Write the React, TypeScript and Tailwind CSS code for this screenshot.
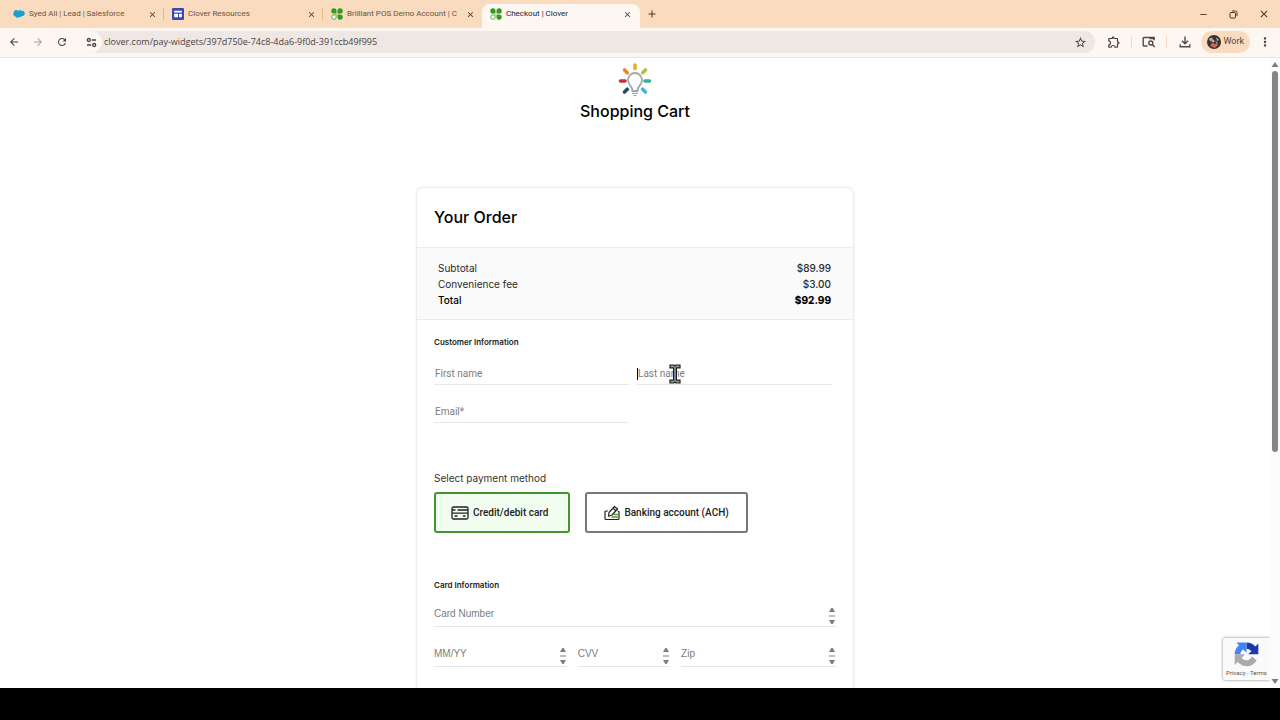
import React from 'react';
import {
  MdArrowBack,
  MdArrowForward,
  MdRefresh,
  MdStarBorder,
  MdOutlineExtension,
  MdMoreVert,
  MdClose,
  MdAdd,
  MdRemove,
} from 'react-icons/md';

const SalesforceIcon: React.FC = () => (
  <svg width="12" height="12" viewBox="0 0 24 24" fill="#1ba1cf">
    <path d="M10 6a5 5 0 0 1 7-.2 5.2 5.2 0 0 1 6.600 5.200 5.200 5.200 0 0 1-6.200 5.100A4.200 4.200 0 0 1 12 18.200a4.600 4.600 0 0 1-7.400-1.700A4.200 4.200 0 0 1 1.500 9.500 4.800 4.800 0 0 1 10 6z" />
  </svg>
);

const SitesIcon: React.FC = () => (
  <svg width="12" height="12" viewBox="0 0 11 11">
    <rect width="11" height="11" rx="1" fill="#3f48ab" />
    <path d="M2 2.500h7v1.700H2zM2 5.200h3.500v3.300H2zM6.500 5.200H9v3.300H6.500z" fill="#fff" />
  </svg>
);

const CloverIcon: React.FC = () => (
  <svg width="12" height="12" viewBox="0 0 24 24" fill="#329b1c">
    <path d="M11 11H5.800A5.200 5.200 0 1 1 11 5.800z" />
    <path d="M13 11h5.200A5.200 5.200 0 1 0 13 5.800z" />
    <path d="M13 13h5.200A5.200 5.200 0 1 1 13 18.200z" />
    <path d="M10.200 13.800H5.800a4.400 4.400 0 1 0 4.400 4.400z" fill="#fff" stroke="#329b1c" strokeWidth="1.600" />
  </svg>
);

const TuneIcon: React.FC = () => (
  <svg width="11" height="11" viewBox="0 0 11 11" fill="none" stroke="#4b4340" strokeWidth="1.300">
    <circle cx="2.800" cy="3" r="1.500" />
    <path d="M5.800 3H10M1 8h4.200" />
    <circle cx="8.200" cy="8" r="1.500" />
  </svg>
);

const PageSearchIcon: React.FC = () => (
  <svg width="14" height="12" viewBox="0 0 14 12" fill="none" stroke="#544742" strokeWidth="1.400">
    <path d="M5.500 10H2a.8.800 0 0 1-.8-.8V2.300a.8.800 0 0 1 .8-.8h10v2.800" />
    <path d="M7.500 2.200h5" strokeWidth="2" />
    <circle cx="8.800" cy="7" r="2" />
    <path d="M10.300 8.500l2.500 2.500" />
  </svg>
);

const DownloadIcon: React.FC = () => (
  <svg width="12" height="12" viewBox="0 0 12 12" fill="none" stroke="#544742" strokeWidth="1.400">
    <path d="M6 .5v7M3 4.800l3 3 3-3M1.200 8.300v2.500h9.600V8.300" />
  </svg>
);

const RestoreIcon: React.FC = () => (
  <svg width="9" height="9" viewBox="0 0 9 9" fill="none" stroke="#4a3626" strokeWidth="1">
    <rect x="1" y="2.500" width="5.500" height="5.500" rx="1" />
    <path d="M3 1h3.500A1.500 1.500 0 0 1 8 2.500V6" />
  </svg>
);

const BulbLogo: React.FC = () => (
  <svg width="34" height="34" viewBox="0 0 34 34" fill="none" strokeLinecap="round">
    <g strokeWidth="3.600">
      <path d="M17 2v3.500" stroke="#d9b52c" />
      <path d="M6.500 7l2.800 2.800" stroke="#e8862e" />
      <path d="M27.500 7l-2.800 2.800" stroke="#a9c54a" />
      <path d="M2.500 18H7" stroke="#c9303f" />
      <path d="M27 18h4.500" stroke="#35b197" />
      <path d="M9.300 26.200L6.500 29" stroke="#1d5365" />
      <path d="M24.700 26.200l2.800 2.800" stroke="#48b4d6" />
    </g>
    <path d="M14.300 28v-1.500c0-2.500-4.300-5-4.300-9.500a7 7 0 0 1 14 0c0 4.500-4.300 7-4.300 9.500V28z" fill="#fff" stroke="#a5a7aa" strokeWidth="1.800" strokeLinejoin="round" />
    <path d="M14.500 30.300h5M15.800 32.500h2.400" stroke="#a5a7aa" strokeWidth="1.200" />
  </svg>
);

const CardIcon: React.FC = () => (
  <svg width="18" height="14" viewBox="0 0 18 14" fill="none" stroke="#222" strokeWidth="1.300">
    <rect x="1" y="1" width="16" height="12" rx="1.500" />
    <path d="M1 4h3.500M6.500 4H17M1 7.200h16M3.500 10h3M12 10h2.500" />
  </svg>
);

const CheckIcon: React.FC = () => (
  <svg width="16" height="16" viewBox="0 0 16 16" fill="none" strokeLinecap="round" strokeLinejoin="round">
    <path d="M3.500 6H2a1 1 0 0 0-1 1v6.500a1 1 0 0 0 1 1h12a1 1 0 0 0 1-1V7a1 1 0 0 0-1-1" stroke="#222" strokeWidth="1.200" />
    <path d="M5 7.500L10.500 1.500l3 2.500-5.500 6-3.500 1.200zM9 3.200l3 2.500" stroke="#222" strokeWidth="1.200" />
    <path d="M10 9.500h3.500M8 12h5.500" stroke="#43a02a" strokeWidth="1.400" />
  </svg>
);

const SpinnerIcon: React.FC = () => (
  <svg width="8" height="16" viewBox="0 0 8 16" fill="#7d7d7d">
    <path d="M3.300 0h1.400L7 4H1zM1 7.500h6v1H1zM3.300 16h1.400L7 12H1z" />
  </svg>
);

const RecaptchaIcon: React.FC = () => (
  <svg width="27" height="27" viewBox="0 0 64 64">
    <path d="M60 31.500V6l-7 7A28 28 0 0 0 32 3.800v14.300c5 0 9 2.500 11.500 6L36 31.500z" fill="#1c3aa9" />
    <path d="M32 3.800H8l6 6.200A28 28 0 0 0 4 31.500h13.500c0-5 3-9.500 6.500-11.500l8 8z" fill="#4285f4" />
    <path d="M4 31.500V57l7-7a28 28 0 0 0 45-3.500L45 36c-2.500 6.500-7.500 9.500-13 9.500-5 0-9-2-11.500-6l8-8z" fill="#ababab" />
  </svg>
);

const tabs = [
  { title: 'Syed Ali | Lead | Salesforce', icon: <SalesforceIcon />, active: false },
  { title: 'Clover Resources', icon: <SitesIcon />, active: false },
  { title: 'Brilliant POS Demo Account | C', icon: <CloverIcon />, active: false },
  { title: 'Checkout | Clover', icon: <CloverIcon />, active: true },
];

const TabStrip: React.FC = () => (
  <div className="flex h-7 items-stretch bg-[#f9dcbf] pl-[5px] font-[Roboto,sans-serif] text-[#4a3626]">
    {tabs.map((tab, i) => (
      <div
        key={tab.title}
        className={
          tab.active
            ? 'mt-1 flex w-[158px] items-center gap-1 rounded-t-lg bg-[#fdf7f2] px-2 pb-1'
            : 'mt-1 flex w-[159px] items-center gap-1 pb-1 pl-2'
        }
      >
        <span className="shrink-0">{tab.icon}</span>
        <span
          className={
            tab.active
              ? 'flex-1 text-[8px] whitespace-nowrap text-[#2b211c]'
              : 'flex-1 text-[8px] whitespace-nowrap text-[#6b5340]'
          }
        >
          {tab.title}
        </span>
        <button type="button" aria-label="Close tab" className="shrink-0">
          <MdClose size={9} />
        </button>
        {!tab.active && <span className={i < 2 ? 'ml-0.5 h-3 w-px bg-[#e9b97f]' : 'ml-0.5 w-px'} />}
      </div>
    ))}
    <button type="button" aria-label="New tab" className="px-1.5">
      <MdAdd size={12} />
    </button>
    <div className="ml-auto flex items-center gap-5 pr-2.5">
      <button type="button" aria-label="Minimize">
        <MdRemove size={11} />
      </button>
      <button type="button" aria-label="Restore">
        <RestoreIcon />
      </button>
      <button type="button" aria-label="Close">
        <MdClose size={12} />
      </button>
    </div>
  </div>
);

const Toolbar: React.FC = () => (
  <div className="flex h-[30px] items-center border-b border-[#eee2d8] bg-[#fdf7f2] px-2 pb-px text-[#443c38]">
    <div className="flex items-center gap-3 pr-3">
      <button type="button" aria-label="Back">
        <MdArrowBack size={12} />
      </button>
      <button type="button" aria-label="Forward" className="text-[#a79f9b]">
        <MdArrowForward size={12} />
      </button>
      <button type="button" aria-label="Reload">
        <MdRefresh size={12} />
      </button>
    </div>
    <div className="flex h-[22px] flex-1 items-center rounded-full bg-[#efe7e4] pr-2">
      <button type="button" aria-label="Site information" className="flex size-[22px] items-center justify-center rounded-full bg-[#fdf7f2]">
        <TuneIcon />
      </button>
      <input
        aria-label="Address"
        defaultValue="clover.com/pay-widgets/397d750e-74c8-4da6-9f0d-391ccb49f995"
        className="min-w-0 flex-1 bg-transparent pl-0.5 text-[9px] text-[#4b4340] outline-none"
      />
      <button type="button" aria-label="Bookmark this page">
        <MdStarBorder size={13} />
      </button>
    </div>
    <div className="flex items-center pl-3">
      <button type="button" aria-label="Extensions">
        <MdOutlineExtension size={14} />
      </button>
      <span className="ml-2.5 h-3 w-px bg-[#f3d9b8]" />
      <button type="button" aria-label="Search this page" className="mx-2.5">
        <PageSearchIcon />
      </button>
      <span className="mr-3 h-3 w-px bg-[#f3d9b8]" />
      <button type="button" aria-label="Downloads">
        <DownloadIcon />
      </button>
      <button
        type="button"
        className="ml-2.5 flex h-[22px] items-center gap-0.5 rounded-full bg-[#f9dcbf] px-1.5 font-[Roboto,sans-serif] text-[9px] text-[#5a4330]"
      >
        <svg width="14" height="14" viewBox="0 0 14 14">
          <circle cx="7" cy="7" r="7" fill="#3a302d" />
          <path d="M2 3.500l3-1 1 2-3 2zM9 2l3 3-2 1z" fill="#a9b3ae" />
          <circle cx="6" cy="6" r="1.500" fill="#d9a48a" />
          <path d="M3 11l2-3 3 1 2-1 1 2-3 3z" fill="#c96b5b" />
          <path d="M8 6l3 1-1 2z" fill="#769a94" />
        </svg>
        Work
      </button>
      <button type="button" aria-label="Menu" className="ml-2">
        <MdMoreVert size={14} />
      </button>
    </div>
  </div>
);

const fieldClass =
  'block h-[22px] w-full border-b border-[#e6e8ea] bg-transparent pl-px font-[Roboto,sans-serif] text-[10px] text-[#333] outline-none placeholder:text-[#7c7c7c] placeholder:opacity-100';

interface CardFieldProps {
  name: string;
  className: string;
}

const CardField: React.FC<CardFieldProps> = ({ name, className }) => (
  <div className={`flex items-end border-b border-[#e3e6e9] ${className}`}>
    <input
      aria-label={name}
      placeholder={name}
      className="h-[26px] min-w-0 flex-1 bg-transparent font-[Liberation_Sans,sans-serif] text-[10px] text-[#333] outline-none placeholder:text-[#7c7c7c] placeholder:opacity-100"
    />
    <span className="mb-0.5">
      <SpinnerIcon />
    </span>
  </div>
);

const OrderSummary: React.FC = () => (
  <div className="border-y border-[#ececec] bg-[#fafafa] pt-3 pr-[22px] pb-[11px] pl-[21px]">
    <table className="w-full text-[10px] leading-4 text-[#2a2a2a]">
      <tbody>
        <tr>
          <th scope="row" className="p-0 text-left font-normal">Subtotal</th>
          <td className="p-0 text-right font-medium">$89.99</td>
        </tr>
        <tr>
          <th scope="row" className="p-0 text-left font-normal">Convenience fee</th>
          <td className="p-0 text-right font-medium">$3.00</td>
        </tr>
        <tr className="text-black">
          <th scope="row" className="p-0 text-left font-medium">Total</th>
          <td className="p-0 text-right font-extrabold">$92.99</td>
        </tr>
      </tbody>
    </table>
  </div>
);

const CheckoutForm: React.FC = () => (
  <form className="px-[17px] pt-4 pb-24">
    <h3 className="text-[8px] leading-3 font-semibold text-[#222]">Customer Information</h3>
    <div className="mt-[15px] grid grid-cols-2 gap-x-2 gap-y-4 pr-1">
      <input aria-label="First name" placeholder="First name" className={fieldClass} />
      <div className="relative">
        <input aria-label="Last name" placeholder="Last name" className={fieldClass} />
        <span className="absolute top-[5px] left-0 h-3 w-px bg-black" />
        <svg className="absolute top-px left-8" width="12" height="20" viewBox="0 0 12 20" fill="none" stroke="#1c1c1c" strokeWidth="1.200">
          <path d="M1 1h4l1 1 1-1h4v2.800H7.400v12.400H11V19H7l-1-1-1 1H1v-2.800h3.600V3.800H1z" fill="#999" />
        </svg>
      </div>
      <input aria-label="Email" placeholder="Email*" className={fieldClass} />
    </div>

    <h3 className="mt-[47px] text-[10px] leading-4 text-[#333]">Select payment method</h3>
    <div className="mt-1.5 flex gap-[15px]">
      <button
        type="button"
        aria-pressed="true"
        className="flex h-[41px] items-center gap-1 rounded-[3px] border-2 border-[#43952f] bg-[#f2fef0] pr-5 pl-[15px] font-[Roboto,sans-serif] text-[10px] font-medium text-[#222]"
      >
        <CardIcon />
        Credit/debit card
      </button>
      <button
        type="button"
        aria-pressed="false"
        className="flex h-[41px] items-center gap-1 rounded-[3px] border-2 border-[#777] bg-white px-[17px] font-[Roboto,sans-serif] text-[10px] font-medium text-[#222]"
      >
        <CheckIcon />
        Banking account (ACH)
      </button>
    </div>

    <h3 className="mt-[46px] text-[8px] leading-3 font-semibold text-[#222]">Card Information</h3>
    <CardField name="Card Number" className="mt-[9px]" />
    <div className="mt-[13px] flex gap-[11px]">
      <CardField name="MM/YY" className="w-[33%]" />
      <CardField name="CVV" className="w-[23%]" />
      <CardField name="Zip" className="flex-1" />
    </div>
  </form>
);

const App: React.FC = () => {
  return (
    <div className="flex h-screen flex-col overflow-hidden bg-white font-[Open_Sans,sans-serif]">
      <TabStrip />
      <Toolbar />
      <div className="relative flex min-h-0 flex-1 font-[Inter,sans-serif]">
        <main className="min-w-0 flex-1 overflow-hidden">
          <div className="flex flex-col items-center pt-[5px]">
            <BulbLogo />
            <h1 className="mt-0.5 text-base leading-6 font-medium text-black">Shopping Cart</h1>
          </div>
          <section className="mx-auto mt-[65px] w-full max-w-[436px] rounded-md bg-white shadow-[0_0_3px_rgba(0,0,0,0.2)]">
            <h2 className="px-[17px] pt-[17px] pb-[18px] text-base leading-6 font-medium text-black">Your Order</h2>
            <OrderSummary />
            <CheckoutForm />
          </section>
        </main>

        <div className="absolute right-[10px] bottom-2 flex h-[42px] w-[47px] flex-col items-center rounded-l-xs bg-[#fafafa] pt-[3px] shadow-[0_0_3px_rgba(0,0,0,0.5)]">
          <RecaptchaIcon />
          <p className="font-[Roboto,sans-serif] text-[6px] leading-[10px] whitespace-nowrap text-[#555]">
            <a href="#">Privacy</a> - <a href="#">Terms</a>
          </p>
        </div>

        <div className="z-10 flex w-[10px] shrink-0 flex-col items-center bg-[#fcfcfc] py-1">
          <svg width="8" height="5" viewBox="0 0 8 5" fill="#7d7d7d">
            <path d="M4 0l3.500 5h-7z" />
          </svg>
          <div className="my-1 min-h-0 w-full flex-1">
            <div className="mx-auto h-[63%] w-1.5 rounded-full bg-[#858585]" />
          </div>
          <svg width="8" height="5" viewBox="0 0 8 5" fill="#7d7d7d">
            <path d="M4 5L.5 0h7z" />
          </svg>
        </div>
      </div>
      <div className="h-8 shrink-0 bg-black" />
    </div>
  );
};

export default App;
